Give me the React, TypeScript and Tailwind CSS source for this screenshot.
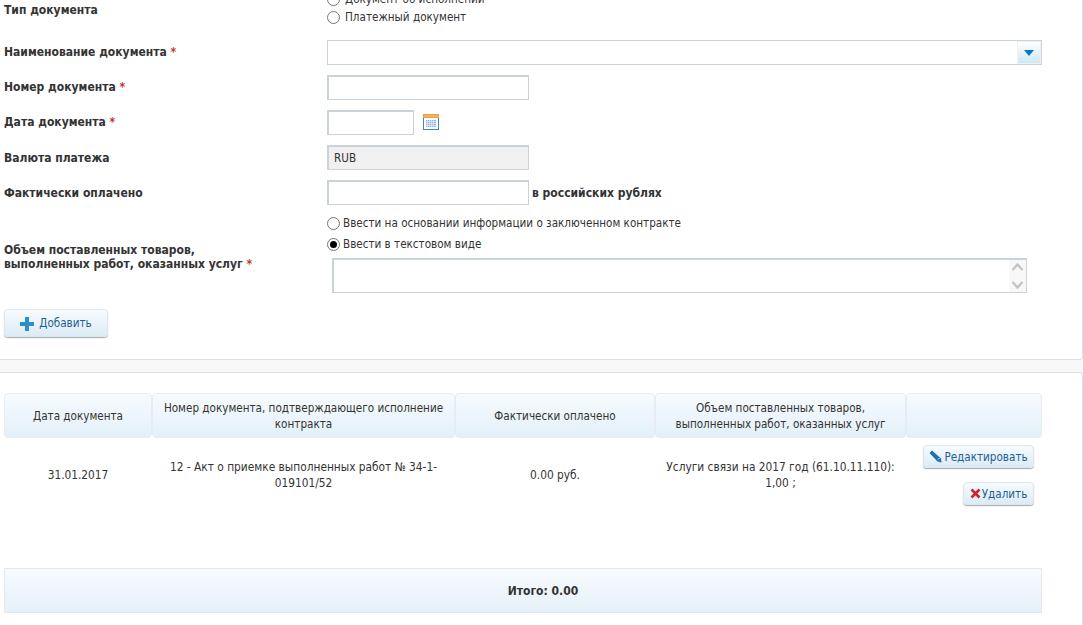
import type { ReactNode } from 'react';

const Req = () => <span className="text-[#c0392b]"> *</span>;

const Radio = ({ checked = false }: { checked?: boolean }) => (
  <span className="flex h-[13px] w-[13px] shrink-0 items-center justify-center rounded-full border border-[#767676] bg-white">
    {checked && <span className="h-[7px] w-[7px] rounded-full bg-black" />}
  </span>
);

const Field = ({ label, children, labelClass = 'pb-[2px]' }: { label: ReactNode; children: ReactNode; labelClass?: string }) => (
  <div className="flex h-[25px] items-center">
    <div className={`w-[327px] pl-1 text-[12px] font-bold text-[#333] ${labelClass}`}>{label}</div>
    {children}
  </div>
);

const inputClass = 'h-[25px] border border-[#ccd3d8] border-t-2 border-l-2 bg-white';

const CalendarIcon = () => (
  <svg width="16" height="16" viewBox="0 0 16 16" className="ml-[9px] -mt-[1px]">
    <rect x="0.5" y="0.5" width="15" height="15" fill="#fff" stroke="#3f86b8" />
    <rect x="0.5" y="0.5" width="15" height="3" fill="#f3b35c" stroke="#e0a250" />
    <rect x="3" y="6" width="10" height="7" fill="#8fb4e6" />
    <path d="M3 7.5h10M3 9.5h10M3 11.5h10M4.5 6v7M6.5 6v7M8.5 6v7M10.5 6v7" stroke="#dbe8f7" strokeWidth="0.8" />
  </svg>
);

const PlusIcon = () => (
  <svg width="14" height="14" viewBox="0 0 14 14">
    <path d="M5 0h4v5h5v4H9v5H5V9H0V5h5z" fill="#2b8fcb" />
  </svg>
);

const PencilIcon = () => (
  <svg width="13" height="13" viewBox="0 0 13 13">
    <path d="M3 0.5 12 8.5 12.5 12.5 8.5 11.5 0.5 3z" fill="#1f6fb2" />
    <path d="M9 9.5 10.5 8" stroke="#fff" />
  </svg>
);

const CrossIcon = () => (
  <svg width="11" height="11" viewBox="0 0 11 11">
    <path d="M1.5 1.5l8 8M9.5 1.5l-8 8" stroke="#c8282c" strokeWidth="2.6" />
  </svg>
);

const Btn = ({ children, className = '' }: { children: ReactNode; className?: string }) => (
  <button className={`flex items-center justify-center rounded-[4px] border border-[#dfe6ea] bg-gradient-to-b from-[#f7fbfe] to-[#dcebf5] text-[#1d5f96] shadow-[0_1px_1px_#9fa9b0] ${className}`}>
    {children}
  </button>
);

const headCell = 'flex items-center justify-center rounded-[4px] border border-[#e6ecef] bg-gradient-to-b from-[#f6fbfe] to-[#e3f0f9] px-1 text-center leading-[16px]';

export default function App() {
  return (
    <div className="h-[625px] overflow-hidden bg-white font-['DejaVu_Sans_Condensed','Noto_Sans',sans-serif] text-[11.6px] text-[#333]">
      {/* form panel, its top is scrolled out of view */}
      <div className="-mt-[8px] h-[368px] rounded-br-[3px] border-r border-b border-[#d9e3e6]">
        <div className="flex h-[48px]">
          <div className="w-[327px] pt-[9px] pl-1 text-[12px] font-bold">Тип документа</div>
          <div className="flex flex-col gap-[3px]">
            <label className="flex h-[14px] items-center gap-[4px]"><Radio /><span className="ml-[1px] pt-[1px]">Документ об исполнении</span></label>
            <label className="mt-[1px] flex h-[14px] items-center gap-[4px]"><Radio /><span className="ml-[1px] pt-[1px]">Платежный документ</span></label>
          </div>
        </div>
        <div className="flex flex-col gap-[10px]">
          <Field label={<>Наименование документа<Req /></>}>
            <div className="flex h-[25px] w-[715px] border border-[#ccd3d8] bg-white">
              <div className="flex-1" />
              <div className="flex w-[24px] items-center justify-center border border-[#eef2f4] bg-gradient-to-b from-[#ffffff] to-[#cfe8f5]">
                <span className="h-0 w-0 border-x-[5px] border-t-[6px] border-x-transparent border-t-[#0b78c2]" />
              </div>
            </div>
          </Field>
          <Field label={<>Номер документа<Req /></>}>
            <div className={`${inputClass} w-[202px]`} />
          </Field>
          <Field label={<>Дата документа<Req /></>}>
            <div className={`${inputClass} w-[87px]`} />
            <CalendarIcon />
          </Field>
          <Field label="Валюта платежа" labelClass="">
            <div className="flex h-[25px] w-[202px] items-center border border-[#ccd3d8] border-t-2 border-l-2 bg-[#f0f0f0] pt-[1px] pl-[5px]">RUB</div>
          </Field>
          <Field label="Фактически оплачено" labelClass="">
            <div className={`${inputClass} w-[202px]`} />
            <span className="ml-[3px] pt-[1px] text-[12px] font-bold">в российских рублях</span>
          </Field>
        </div>
        <div className="mt-[10px] flex">
          <div className="w-[327px] pt-[28px] pl-1 text-[12px] leading-[14px] font-bold">
            Объем поставленных товаров,<br />выполненных работ, оказанных услуг<Req />
          </div>
          <div>
            <label className="flex h-[16px] items-center gap-[3px]"><Radio /><span className="pt-[1px]">Ввести на основании информации о заключенном контракте</span></label>
            <label className="mt-[5px] flex h-[16px] items-center gap-[3px]"><Radio checked /><span className="pt-[1px]">Ввести в текстовом виде</span></label>
            <div className="mt-[6px] ml-[5px] flex h-[35px] w-[695px] justify-end border border-[#ccd3d8] border-t-2 border-l-2 bg-white">
              <div className="flex w-[17px] flex-col items-center justify-between bg-[#f8f8f8] py-[2px]">
                <svg width="13" height="10" viewBox="0 0 13 10"><path d="M1.5 8 6.5 2.5 11.5 8" fill="none" stroke="#c4c4c4" strokeWidth="2.4" /></svg>
                <svg width="13" height="10" viewBox="0 0 13 10"><path d="M1.5 2 6.5 7.5 11.5 2" fill="none" stroke="#c4c4c4" strokeWidth="2.4" /></svg>
              </div>
            </div>
          </div>
        </div>
        <div className="mt-[16px] pl-1">
          <Btn className="h-[28px] w-[104px] gap-[5px] pt-[1px]"><PlusIcon />Добавить</Btn>
        </div>
      </div>

      <div className="h-[12px] bg-[#f8f8f8]" />

      {/* documents table */}
      <div className="h-[260px] rounded-tr-[3px] border-t border-r border-[#d9e3e6] px-1 pt-[20px]">
        <div className="grid h-[45px] w-[1038px] grid-cols-[148px_303px_200px_251px_136px]">
          <div className={headCell}>Дата документа</div>
          <div className={headCell}>Номер документа, подтверждающего исполнение контракта</div>
          <div className={headCell}>Фактически оплачено</div>
          <div className={headCell}>Объем поставленных товаров, выполненных работ, оказанных услуг</div>
          <div className={headCell} />
        </div>
        <div className="grid h-[74px] w-[1038px] grid-cols-[148px_303px_200px_251px_136px] items-center text-center text-[11.8px] leading-[16px]">
          <div>31.01.2017</div>
          <div className="px-3">12 - Акт о приемке выполненных работ № 34-1-019101/52</div>
          <div>0.00 руб.</div>
          <div className="px-2">Услуги связи на 2017 год (61.10.11.110): 1,00 ;</div>
          <div className="flex flex-col items-end gap-[14px] pr-[8px] text-[11.6px]">
            <Btn className="h-[23px] w-[111px] gap-[2px]"><PencilIcon />Редактировать</Btn>
            <Btn className="h-[23px] w-[71px] gap-[1px]"><CrossIcon />Удалить</Btn>
          </div>
        </div>
        <div className="mt-[56px] flex h-[45px] w-[1038px] items-center justify-center border border-[#e4e8ea] bg-gradient-to-b from-[#f8fbfe] to-[#e5f1f9] pl-[40px] text-[12px] font-bold">
          Итого: 0.00
        </div>
      </div>
    </div>
  );
}
